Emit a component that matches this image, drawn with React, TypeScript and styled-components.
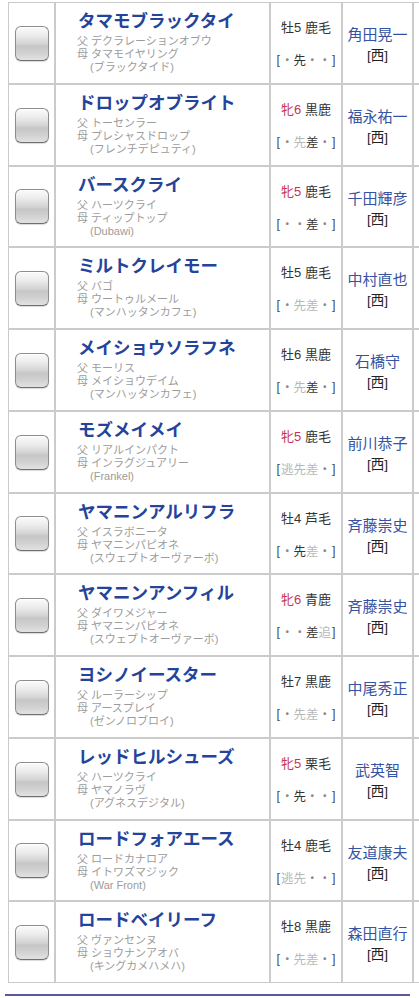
import React from "react";
import styled, { createGlobalStyle } from "styled-components";

const GlobalStyle = createGlobalStyle`
  html, body { margin: 0; padding: 0; background: #fff; overflow: hidden; }
  body { font-family: "Liberation Sans", "Noto Sans CJK JP", sans-serif; }
`;

const Page = styled.div`
  box-sizing: border-box;
  padding: 2px 0 0 8px;
  width: 419px;
  overflow: hidden;
`;

const Table = styled.div`
  display: flex;
  flex-direction: column;
  width: 480px;
`;

const Row = styled.div<{ $h: number }>`
  display: grid;
  grid-template-columns: 47px 215px 72px 71px 60px;
  height: ${(p) => p.$h}px;
`;

const Cell = styled.div`
  box-sizing: border-box;
  border: 1px solid #cbcbcb;
  min-width: 0;
`;

const CheckCell = styled(Cell)`
  display: flex;
  align-items: center;
  justify-content: center;
`;

const CheckBox = styled.div`
  box-sizing: border-box;
  width: 34px;
  height: 35px;
  border-radius: 6px;
  border: 1px solid #8d8d8d;
  border-bottom-color: #6f6f6f;
  background: linear-gradient(
    to bottom,
    #fbfbfb 0%,
    #ececec 25%,
    #d4d4d4 50%,
    #c6c6c6 58%,
    #d2d2d2 80%,
    #e2e2e2 100%
  );
  box-shadow: inset 0 1px 0 #ffffff, 0 1px 1px rgba(0, 0, 0, 0.15);
`;

const NameCell = styled(Cell)`
  padding: 5px 0 0 22px;
  overflow: hidden;
`;

const HorseName = styled.div`
  font-family: "Noto Sans CJK JP", sans-serif;
  font-weight: 700;
  font-size: 17.5px;
  line-height: 24px;
  color: #24449c;
  white-space: nowrap;
`;

const Pedigree = styled.div`
  margin-top: 3px;
  margin-left: -1px;
`;

const PedLine = styled.div<{ $indent?: boolean }>`
  font-family: "Liberation Sans", "Noto Sans CJK JP", sans-serif;
  font-size: 11px;
  line-height: 13px;
  color: #9c9c9c;
  white-space: nowrap;
  padding-left: ${(p) => (p.$indent ? "13px" : "0")};
`;

const MidCell = styled(Cell)`
  display: flex;
  flex-direction: column;
  align-items: center;
  justify-content: center;
  gap: 16px;
  padding-top: 2px;
`;

const SexLine = styled.div`
  font-size: 13px;
  line-height: 16px;
  color: #333;
  white-space: nowrap;
`;

const Sex = styled.span<{ $female: boolean }>`
  color: ${(p) => (p.$female ? "#c63553" : "#333")};
`;

const StyleLine = styled.div`
  font-size: 12.5px;
  line-height: 16px;
  white-space: nowrap;
  display: flex;
`;

const Bracket = styled.span`
  color: #4a4a4a;
  font-family: "Liberation Sans", sans-serif;
  padding: 0 1px;
`;

const Slot = styled.span<{ $kind: "dot" | "on" | "off" }>`
  font-family: "Noto Sans CJK JP", sans-serif;
  display: inline-block;
  width: 12.5px;
  text-align: center;
  color: ${(p) => (p.$kind === "on" ? "#333" : p.$kind === "off" ? "#b8b8b8" : "#8a8a8a")};
`;

const JockeyCell = styled(Cell)`
  display: flex;
  flex-direction: column;
  align-items: center;
  justify-content: center;
  padding-top: 4px;
`;

const Jockey = styled.div`
  font-family: "Noto Sans CJK JP", sans-serif;
  font-size: 15px;
  line-height: 22px;
  color: #3553a3;
  white-space: nowrap;
`;

const Region = styled.div`
  font-size: 13.5px;
  line-height: 22px;
  color: #222;
`;

const Footer = styled.div`
  margin: 11px 0 0 -3px;
  width: 405px;
  height: 2px;
  background: #5a5a98;
`;

type Horse = {
  name: string;
  sire: string;
  dam: string;
  damSire: string;
  sex: string;
  coat: string;
  slots: [string, string, string, string];
  on: number[];
  jockey: string;
};

const horses: Horse[] = [
  { name: "タマモブラックタイ", sire: "デクラレーションオブウ", dam: "タマモイヤリング", damSire: "(ブラックタイド)", sex: "牡5", coat: "鹿毛", slots: ["・", "先", "・", "・"], on: [1], jockey: "角田晃一" },
  { name: "ドロップオブライト", sire: "トーセンラー", dam: "プレシャスドロップ", damSire: "(フレンチデピュティ)", sex: "牝6", coat: "黒鹿", slots: ["・", "先", "差", "・"], on: [2], jockey: "福永祐一" },
  { name: "バースクライ", sire: "ハーツクライ", dam: "ティップトップ", damSire: "(Dubawi)", sex: "牝5", coat: "鹿毛", slots: ["・", "・", "差", "・"], on: [2], jockey: "千田輝彦" },
  { name: "ミルトクレイモー", sire: "バゴ", dam: "ウートゥルメール", damSire: "(マンハッタンカフェ)", sex: "牡5", coat: "鹿毛", slots: ["・", "先", "差", "・"], on: [], jockey: "中村直也" },
  { name: "メイショウソラフネ", sire: "モーリス", dam: "メイショウデイム", damSire: "(マンハッタンカフェ)", sex: "牡6", coat: "黒鹿", slots: ["・", "先", "差", "・"], on: [2], jockey: "石橋守" },
  { name: "モズメイメイ", sire: "リアルインパクト", dam: "インラグジュアリー", damSire: "(Frankel)", sex: "牝5", coat: "鹿毛", slots: ["逃", "先", "差", "・"], on: [], jockey: "前川恭子" },
  { name: "ヤマニンアルリフラ", sire: "イスラボニータ", dam: "ヤマニンパピオネ", damSire: "(スウェプトオーヴァーボ)", sex: "牡4", coat: "芦毛", slots: ["・", "先", "差", "・"], on: [1], jockey: "斉藤崇史" },
  { name: "ヤマニンアンフィル", sire: "ダイワメジャー", dam: "ヤマニンパピオネ", damSire: "(スウェプトオーヴァーボ)", sex: "牝6", coat: "青鹿", slots: ["・", "・", "差", "追"], on: [2], jockey: "斉藤崇史" },
  { name: "ヨシノイースター", sire: "ルーラーシップ", dam: "アースプレイ", damSire: "(ゼンノロブロイ)", sex: "牡7", coat: "黒鹿", slots: ["・", "先", "差", "・"], on: [], jockey: "中尾秀正" },
  { name: "レッドヒルシューズ", sire: "ハーツクライ", dam: "ヤマノラヴ", damSire: "(アグネスデジタル)", sex: "牝5", coat: "栗毛", slots: ["・", "先", "・", "・"], on: [1], jockey: "武英智" },
  { name: "ロードフォアエース", sire: "ロードカナロア", dam: "イトワズマジック", damSire: "(War Front)", sex: "牡4", coat: "鹿毛", slots: ["逃", "先", "・", "・"], on: [], jockey: "友道康夫" },
  { name: "ロードベイリーフ", sire: "ヴァンセンヌ", dam: "ショウナンアオバ", damSire: "(キングカメハメハ)", sex: "牡8", coat: "黒鹿", slots: ["・", "先", "差", "・"], on: [], jockey: "森田直行" },
];

const heights = [82, 82, 81, 82, 82, 82, 81, 82, 82, 82, 81, 82];

export default function App() {
  return (
    <>
      <GlobalStyle />
      <Page>
        <Table>
          {horses.map((h, i) => (
            <Row key={i} $h={heights[i]}>
              <CheckCell>
                <CheckBox />
              </CheckCell>
              <NameCell>
                <HorseName>{h.name}</HorseName>
                <Pedigree>
                  <PedLine>父 {h.sire}</PedLine>
                  <PedLine>母 {h.dam}</PedLine>
                  <PedLine $indent>{h.damSire}</PedLine>
                </Pedigree>
              </NameCell>
              <MidCell>
                <SexLine>
                  <Sex $female={h.sex.startsWith("牝")}>{h.sex}</Sex> {h.coat}
                </SexLine>
                <StyleLine>
                  <Bracket>[</Bracket>
                  {h.slots.map((s, k) => (
                    <Slot key={k} $kind={s === "・" ? "dot" : h.on.includes(k) ? "on" : "off"}>
                      {s}
                    </Slot>
                  ))}
                  <Bracket>]</Bracket>
                </StyleLine>
              </MidCell>
              <JockeyCell>
                <Jockey>{h.jockey}</Jockey>
                <Region>[西]</Region>
              </JockeyCell>
              <Cell />
            </Row>
          ))}
        </Table>
        <Footer />
      </Page>
    </>
  );
}
